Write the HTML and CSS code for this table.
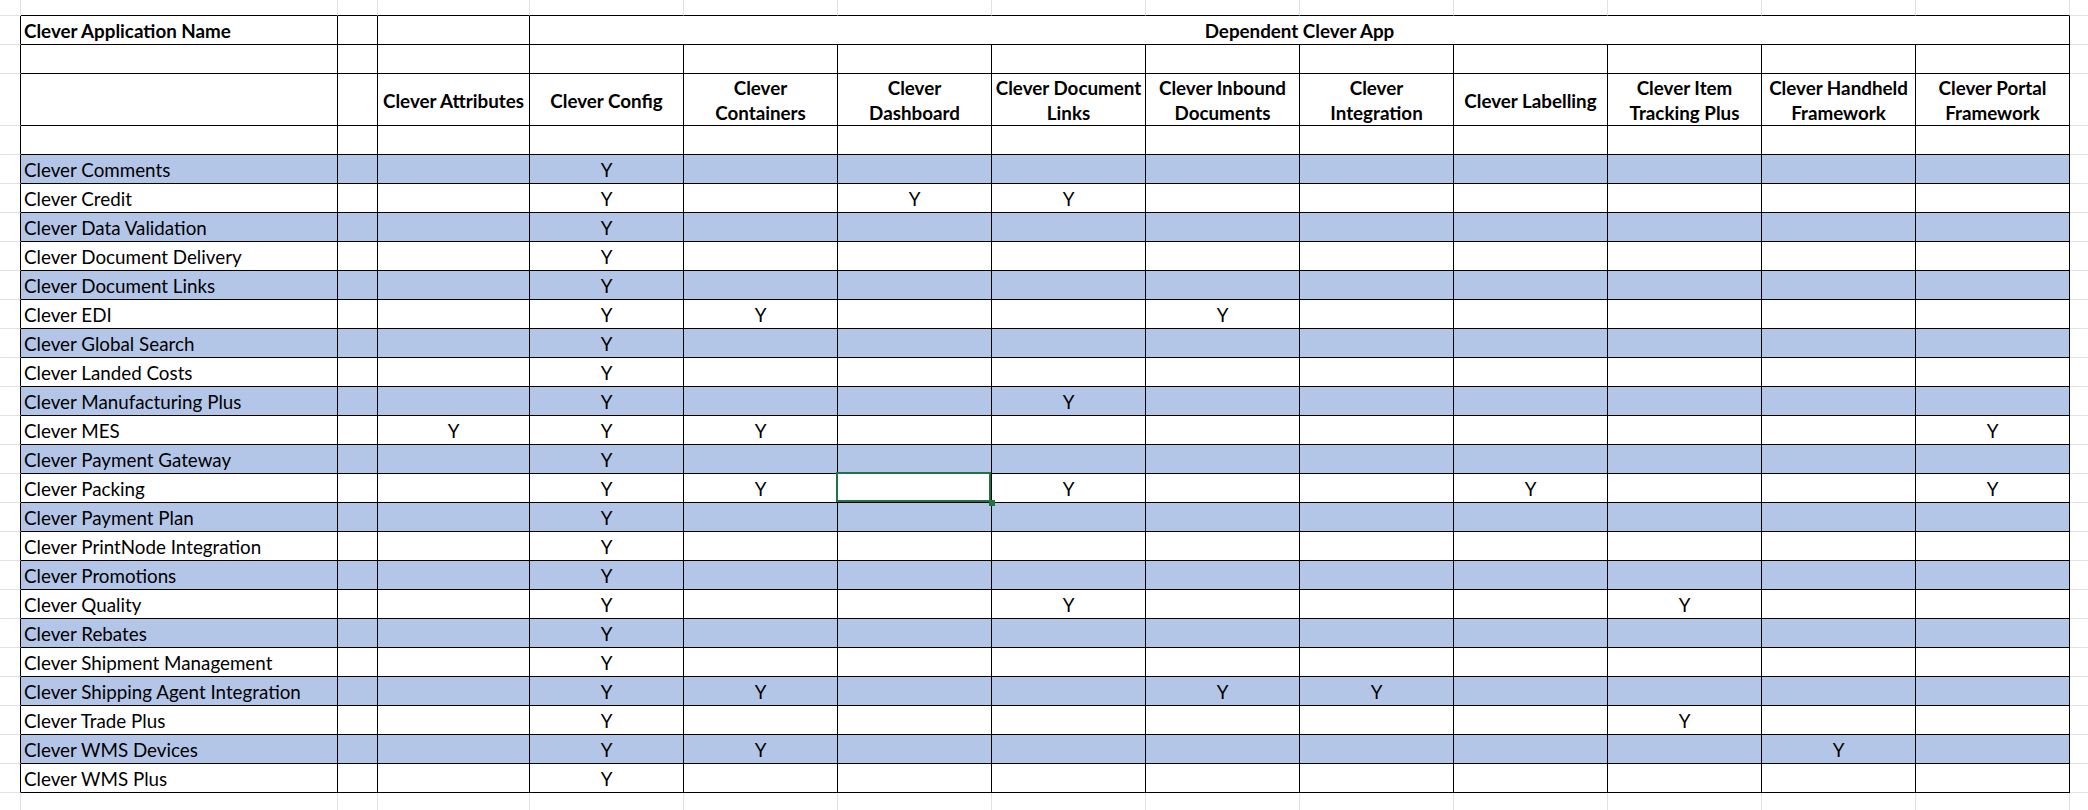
FILE: index.html
```html
<!DOCTYPE html>
<html lang="en">
<head>
<meta charset="utf-8">
<title>Clever App Dependencies</title>
<link rel="stylesheet" href="styles.css">
</head>
<body>
<table class="sheet">
<colgroup>
<col class="c-ml"><col class="c-a"><col class="c-b"><col class="c-attr">
<col class="c-d"><col class="c-d"><col class="c-d"><col class="c-d"><col class="c-d">
<col class="c-d"><col class="c-d"><col class="c-d"><col class="c-d"><col class="c-d">
<col class="c-mr">
</colgroup>
<tbody>
<tr class="top"><td class="ml"></td><td></td><td></td><td></td><td></td><td></td><td></td><td></td><td></td><td></td><td></td><td></td><td></td><td></td><td class="mr"></td></tr>
<tr class="r"><td class="ml"></td><td class="nm hb">Clever Application Name</td><td></td><td></td><td colspan="10" class="hb">Dependent Clever App</td><td class="mr"></td></tr>
<tr class="r"><td class="ml"></td><td></td><td></td><td></td><td></td><td></td><td></td><td></td><td></td><td></td><td></td><td></td><td></td><td></td><td class="mr"></td></tr>
<tr class="hr"><td class="ml"></td><td></td><td></td>
<td class="h">Clever Attributes</td>
<td class="h">Clever Config</td>
<td class="h">Clever<br>Containers</td>
<td class="h">Clever<br>Dashboard</td>
<td class="h">Clever Document<br>Links</td>
<td class="h">Clever Inbound<br>Documents</td>
<td class="h">Clever<br>Integration</td>
<td class="h">Clever Labelling</td>
<td class="h">Clever Item<br>Tracking Plus</td>
<td class="h">Clever Handheld<br>Framework</td>
<td class="h">Clever Portal<br>Framework</td>
<td class="mr"></td></tr>
<tr class="r"><td class="ml"></td><td></td><td></td><td></td><td></td><td></td><td></td><td></td><td></td><td></td><td></td><td></td><td></td><td></td><td class="mr"></td></tr>

<tr class="r b"><td class="ml"></td><td class="nm">Clever Comments</td><td></td><td></td><td>Y</td><td></td><td></td><td></td><td></td><td></td><td></td><td></td><td></td><td></td><td class="mr"></td></tr>
<tr class="r"><td class="ml"></td><td class="nm">Clever Credit</td><td></td><td></td><td>Y</td><td></td><td>Y</td><td>Y</td><td></td><td></td><td></td><td></td><td></td><td></td><td class="mr"></td></tr>
<tr class="r b"><td class="ml"></td><td class="nm">Clever Data Validation</td><td></td><td></td><td>Y</td><td></td><td></td><td></td><td></td><td></td><td></td><td></td><td></td><td></td><td class="mr"></td></tr>
<tr class="r"><td class="ml"></td><td class="nm">Clever Document Delivery</td><td></td><td></td><td>Y</td><td></td><td></td><td></td><td></td><td></td><td></td><td></td><td></td><td></td><td class="mr"></td></tr>
<tr class="r b"><td class="ml"></td><td class="nm">Clever Document Links</td><td></td><td></td><td>Y</td><td></td><td></td><td></td><td></td><td></td><td></td><td></td><td></td><td></td><td class="mr"></td></tr>
<tr class="r"><td class="ml"></td><td class="nm">Clever EDI</td><td></td><td></td><td>Y</td><td>Y</td><td></td><td></td><td>Y</td><td></td><td></td><td></td><td></td><td></td><td class="mr"></td></tr>
<tr class="r b"><td class="ml"></td><td class="nm">Clever Global Search</td><td></td><td></td><td>Y</td><td></td><td></td><td></td><td></td><td></td><td></td><td></td><td></td><td></td><td class="mr"></td></tr>
<tr class="r"><td class="ml"></td><td class="nm">Clever Landed Costs</td><td></td><td></td><td>Y</td><td></td><td></td><td></td><td></td><td></td><td></td><td></td><td></td><td></td><td class="mr"></td></tr>
<tr class="r b"><td class="ml"></td><td class="nm">Clever Manufacturing Plus</td><td></td><td></td><td>Y</td><td></td><td></td><td>Y</td><td></td><td></td><td></td><td></td><td></td><td></td><td class="mr"></td></tr>
<tr class="r"><td class="ml"></td><td class="nm">Clever MES</td><td></td><td>Y</td><td>Y</td><td>Y</td><td></td><td></td><td></td><td></td><td></td><td></td><td></td><td>Y</td><td class="mr"></td></tr>
<tr class="r b"><td class="ml"></td><td class="nm">Clever Payment Gateway</td><td></td><td></td><td>Y</td><td></td><td></td><td></td><td></td><td></td><td></td><td></td><td></td><td></td><td class="mr"></td></tr>
<tr class="r"><td class="ml"></td><td class="nm">Clever Packing</td><td></td><td></td><td>Y</td><td>Y</td><td class="sel"></td><td>Y</td><td></td><td></td><td>Y</td><td></td><td></td><td>Y</td><td class="mr"></td></tr>
<tr class="r b"><td class="ml"></td><td class="nm">Clever Payment Plan</td><td></td><td></td><td>Y</td><td></td><td></td><td></td><td></td><td></td><td></td><td></td><td></td><td></td><td class="mr"></td></tr>
<tr class="r"><td class="ml"></td><td class="nm">Clever PrintNode Integration</td><td></td><td></td><td>Y</td><td></td><td></td><td></td><td></td><td></td><td></td><td></td><td></td><td></td><td class="mr"></td></tr>
<tr class="r b"><td class="ml"></td><td class="nm">Clever Promotions</td><td></td><td></td><td>Y</td><td></td><td></td><td></td><td></td><td></td><td></td><td></td><td></td><td></td><td class="mr"></td></tr>
<tr class="r"><td class="ml"></td><td class="nm">Clever Quality</td><td></td><td></td><td>Y</td><td></td><td></td><td>Y</td><td></td><td></td><td></td><td>Y</td><td></td><td></td><td class="mr"></td></tr>
<tr class="r b"><td class="ml"></td><td class="nm">Clever Rebates</td><td></td><td></td><td>Y</td><td></td><td></td><td></td><td></td><td></td><td></td><td></td><td></td><td></td><td class="mr"></td></tr>
<tr class="r"><td class="ml"></td><td class="nm">Clever Shipment Management</td><td></td><td></td><td>Y</td><td></td><td></td><td></td><td></td><td></td><td></td><td></td><td></td><td></td><td class="mr"></td></tr>
<tr class="r b"><td class="ml"></td><td class="nm">Clever Shipping Agent Integration</td><td></td><td></td><td>Y</td><td>Y</td><td></td><td></td><td>Y</td><td>Y</td><td></td><td></td><td></td><td></td><td class="mr"></td></tr>
<tr class="r"><td class="ml"></td><td class="nm">Clever Trade Plus</td><td></td><td></td><td>Y</td><td></td><td></td><td></td><td></td><td></td><td></td><td>Y</td><td></td><td></td><td class="mr"></td></tr>
<tr class="r b"><td class="ml"></td><td class="nm">Clever WMS Devices</td><td></td><td></td><td>Y</td><td>Y</td><td></td><td></td><td></td><td></td><td></td><td></td><td>Y</td><td></td><td class="mr"></td></tr>
<tr class="r"><td class="ml"></td><td class="nm">Clever WMS Plus</td><td></td><td></td><td>Y</td><td></td><td></td><td></td><td></td><td></td><td></td><td></td><td></td><td></td><td class="mr"></td></tr>

<tr class="bot"><td class="ml"></td><td></td><td></td><td></td><td></td><td></td><td></td><td></td><td></td><td></td><td></td><td></td><td></td><td></td><td class="mr"></td></tr>
</tbody>
</table>
</body>
</html>
```
FILE: styles.css
```css
html, body {
  margin: 0;
  padding: 0;
  background: #ffffff;
  overflow: hidden;
}

.sheet {
  border-collapse: separate;
  border-spacing: 0;
  table-layout: fixed;
  width: 2088px;
  font-family: "Lato", "Liberation Sans", sans-serif;
  font-size: 18.8px;
  color: #000000;
}

.c-ml { width: 21px; }
.c-a { width: 317px; }
.c-b { width: 40px; }
.c-attr { width: 152px; }
.c-d { width: 154px; }
.c-mr { width: 18px; }

.sheet td {
  box-sizing: border-box;
  padding: 2px 2px 0;
  line-height: 26px;
  text-align: center;
  vertical-align: middle;
  white-space: nowrap;
  overflow: hidden;
  border-right: 1px solid #000000;
  border-bottom: 1px solid #000000;
  background: #ffffff;
}

/* row heights (border-box, include the bottom line) */
.sheet tr.top { height: 16px; }
.sheet tr.r { height: 29px; }
.sheet tr.hr { height: 52px; }
.sheet tr.bot { height: 17px; }

/* spreadsheet gridlines outside the bordered range */
.sheet td.ml { border-bottom-color: #e1e1e1; }
.sheet td.mr { border-right: none; border-bottom-color: #e1e1e1; }

.sheet tr.top td { border-right-color: #e1e1e1; }
.sheet tr.top td.ml { border-bottom-color: #e1e1e1; }

.sheet tr.bot td { border-right-color: #e1e1e1; border-bottom: none; }
.sheet tr.bot td.mr { border-right: none; }

/* banded rows */
.sheet tr.b td { background: #b4c6e7; }
.sheet tr.b td.ml,
.sheet tr.b td.mr { background: #ffffff; }

/* text cells */
.sheet td.nm {
  text-align: left;
  padding-left: 3px;
}
.sheet td.hb { font-weight: 700; }

.sheet tr.hr td { padding: 1px 1px 0; line-height: 25px; }
.sheet td.h { font-weight: 700; }

/* active cell */
.sheet td.sel { position: relative; overflow: visible; }
.sheet td.sel::after {
  content: "";
  position: absolute;
  top: -2px;
  left: -2px;
  right: 0;
  bottom: 0;
  border: 2px solid #217346;
}
.sheet td.sel::before {
  content: "";
  position: absolute;
  right: -4px;
  bottom: -4px;
  width: 6px;
  height: 6px;
  background: #217346;
  z-index: 1;
}
```
